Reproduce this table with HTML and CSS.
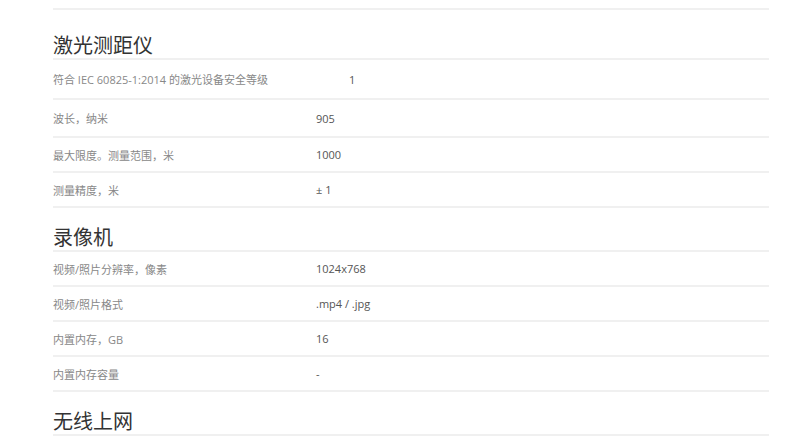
FILE: index.html
```html
<!DOCTYPE html>
<html lang="zh-CN">
<head>
    <meta charset="UTF-8">
    <meta name="viewport" content="width=device-width, initial-scale=1.0">
    <title>技术规格</title>
    <link rel="stylesheet" href="styles.css">
</head>
<body>
    <div class="specs">
        <div class="top-rule"></div>

        <div class="spec-group">
            <h2>激光测距仪</h2>
            <div class="row row-first">
                <span class="label">符合 IEC 60825-1:2014 的激光设备安全等级</span>
                <span class="value value-shift">1</span>
            </div>
            <div class="row row-second">
                <span class="label">波长，纳米</span>
                <span class="value">905</span>
            </div>
            <div class="row">
                <span class="label">最大限度。测量范围，米</span>
                <span class="value">1000</span>
            </div>
            <div class="row">
                <span class="label">测量精度，米</span>
                <span class="value">± 1</span>
            </div>
        </div>

        <div class="spec-group">
            <h2>录像机</h2>
            <div class="row">
                <span class="label">视频/照片分辨率，像素</span>
                <span class="value">1024x768</span>
            </div>
            <div class="row">
                <span class="label">视频/照片格式</span>
                <span class="value">.mp4 / .jpg</span>
            </div>
            <div class="row">
                <span class="label">内置内存，GB</span>
                <span class="value">16</span>
            </div>
            <div class="row">
                <span class="label">内置内存容量</span>
                <span class="value">-</span>
            </div>
        </div>

        <div class="spec-group">
            <h2>无线上网</h2>
        </div>
    </div>
</body>
</html>
```

FILE: styles.css
```css
body {
    margin: 0;
    background: #fff;
    font-family: "Open Sans", "Noto Sans CJK SC", sans-serif;
}
.specs {
    margin-left: 53px;
    width: 716px;
    padding-top: 8px;
}
.top-rule {
    border-top: 2px solid #f0f0f0;
    margin-bottom: 6px;
}
.spec-group h2 {
    margin: 0;
    padding-top: 18px;
    font-size: 20px;
    line-height: 24px;
    font-weight: 400;
    color: #333;
    border-bottom: 2px solid #f0f0f0;
}
.row {
    display: flex;
    align-items: center;
    height: 33px;
    border-bottom: 2px solid #f0f0f0;
    font-size: 11px;
}
.row-first {
    height: 38px;
}
.row-second {
    height: 36px;
}
.label {
    width: 263px;
    color: #888;
}
.value {
    color: #555;
}
.value-shift {
    padding-left: 33px;
}
```
